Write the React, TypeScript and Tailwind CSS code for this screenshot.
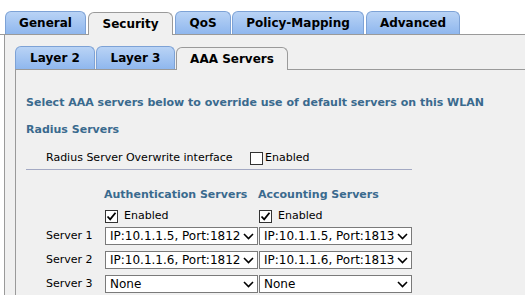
import React from "react";

const font = { fontFamily: '"DejaVu Sans", Verdana, sans-serif' };

function Tab({ label, active, w }: { label: string; active?: boolean; w: string }) {
  if (active) {
    return (
      <div
        className={`${w} h-[23px] -mb-px rounded-t-[6px] border border-b-0 border-[#9a9a9a] bg-[#f0f0f0] flex items-center justify-center text-[12px] font-bold text-black whitespace-nowrap`}
      >
        {label}
      </div>
    );
  }
  return (
    <div
      className={`${w} h-[23px] rounded-t-[6px] border border-b-0 border-[#7da2d6] bg-gradient-to-b from-[#b9d3f5] to-[#8fb7ee] flex items-center justify-center text-[12px] font-bold text-black whitespace-nowrap`}
    >
      {label}
    </div>
  );
}

function Check({ checked }: { checked?: boolean }) {
  return (
    <div className="w-[13px] h-[13px] border border-[#333] bg-white flex items-center justify-center shrink-0">
      {checked && (
        <svg width="11" height="11" viewBox="0 0 11 11">
          <path d="M1.5 5.5 L4.2 8.3 L9.5 1.8" stroke="#000" strokeWidth="1.8" fill="none" />
        </svg>
      )}
    </div>
  );
}

function Select({ value, w }: { value: string; w: string }) {
  return (
    <div className={`${w} h-[18px] border border-[#7a7a7a] bg-white flex items-center justify-between pl-[4px] pr-[3px] text-[12px] text-black leading-none`}>
      <span className="whitespace-nowrap">{value}</span>
      <svg width="11" height="7" viewBox="0 0 11 7" className="shrink-0">
        <path d="M1 1 L5.5 5.5 L10 1" stroke="#000" strokeWidth="1.6" fill="none" />
      </svg>
    </div>
  );
}

export default function App() {
  return (
    <div className="w-[525px] h-[295px] bg-white overflow-hidden" style={font}>
      <div className="pt-[11px] pl-[5px] flex items-end gap-[1px] border-b border-[#9a9a9a]">
        <div className="mr-[1px]"><Tab label="General" w="w-[81px]" /></div>
        <Tab label="Security" active w="w-[85px]" />
        <div className="ml-[1px]"><Tab label="QoS" w="w-[56px]" /></div>
        <Tab label="Policy-Mapping" w="w-[132px]" />
        <div className="ml-[1px]"><Tab label="Advanced" w="w-[94px]" /></div>
      </div>
      <div className="ml-[4px] border-l border-[#9a9a9a] bg-[#f0f0f0] h-[262px] pt-[11px] pl-[10px]">
        <div className="flex items-end gap-[1px] border-b border-[#9a9a9a]">
          <Tab label="Layer 2" w="w-[80px]" />
          <Tab label="Layer 3" w="w-[79px]" />
          <Tab label="AAA Servers" active w="w-[112px]" />
        </div>
        <div className="border-l border-[#9a9a9a] h-[230px] pl-[10px] pt-[25px] text-[11px] leading-[16px] whitespace-nowrap">
          <div className="font-bold text-[#3a6a8e]">
            Select AAA servers below to override use of default servers on this WLAN
          </div>
          <div className="mt-[11px] font-bold text-[#3a6a8e]">Radius Servers</div>
          <div className="mt-[12px] pl-[20px] flex items-center text-black">
            <span className="w-[204px]">Radius Server Overwrite interface</span>
            <Check />
            <span className="ml-[2px]">Enabled</span>
          </div>
          <div className="mt-[3px] w-[386px] h-px bg-[#a3a9c3]" />
          <div className="mt-[17px] pl-[78px] flex font-bold text-[#3a6a8e]">
            <span className="w-[154px]">Authentication Servers</span>
            <span>Accounting Servers</span>
          </div>
          <div className="mt-[5px] pl-[79px] flex text-black">
            <div className="w-[154px] flex items-center gap-[6px]"><Check checked /><span>Enabled</span></div>
            <div className="flex items-center gap-[6px]"><Check checked /><span>Enabled</span></div>
          </div>
          {[
            ["Server 1", "IP:10.1.1.5, Port:1812", "IP:10.1.1.5, Port:1813"],
            ["Server 2", "IP:10.1.1.6, Port:1812", "IP:10.1.1.6, Port:1813"],
            ["Server 3", "None", "None"],
          ].map(([l, a, b], i) => (
            <div key={l} className={`${i === 0 ? "mt-[3px]" : "mt-[6px]"} pl-[20px] flex items-center text-black`}>
              <span className="w-[59px]">{l}</span>
              <Select value={a} w="w-[153px]" />
              <div className="ml-[1px]"><Select value={b} w="w-[153px]" /></div>
            </div>
          ))}
        </div>
      </div>
    </div>
  );
}
